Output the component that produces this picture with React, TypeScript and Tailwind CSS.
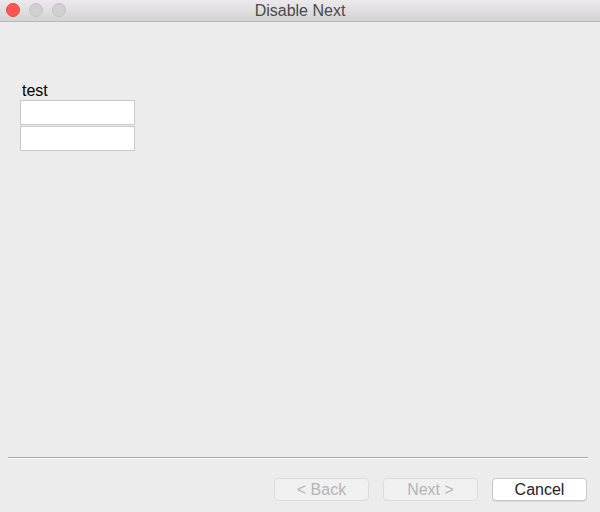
import React from 'react';

const font = { fontFamily: '"Helvetica Neue", "Liberation Sans", Arial, sans-serif' };

const TitleBar: React.FC = () => (
    <div className="relative h-[22px] flex items-center justify-center bg-gradient-to-b from-[#ebe9eb] to-[#d5d4d5] border-b border-[#b8b8b8]">
        <div className="absolute left-[6px] top-[3px] flex gap-[9px]">
            <span className="w-[14px] h-[14px] rounded-full bg-[#fc5753] border border-[#df4744]" />
            <span className="w-[14px] h-[14px] rounded-full bg-[#d0d0d0] border border-[#c2c2c2]" />
            <span className="w-[14px] h-[14px] rounded-full bg-[#d0d0d0] border border-[#c2c2c2]" />
        </div>
        <span className="text-[16px] text-[#4a4a4a] leading-none">Disable Next</span>
    </div>
);

const WizardButton: React.FC<{ label: string; disabled?: boolean }> = ({ label, disabled }) => (
    <button
        disabled={disabled}
        className={`w-[95px] h-[23px] rounded-[4px] text-[16px] leading-none flex items-center justify-center border ${
            disabled
                ? 'bg-[#f0f0f0] border-[#dcdcdc] text-[#b5b5b5]'
                : 'bg-white border-[#c8c8c8] text-[#222] shadow-[0_1px_0_rgba(0,0,0,0.08)]'
        }`}
    >
        {label}
    </button>
);

export default function App() {
    return (
        <div className="w-[600px] h-[512px] bg-[#ececec] flex flex-col overflow-hidden" style={font}>
            <TitleBar />
            <div className="flex-1 flex flex-col">
                <div className="pt-[60px] pl-[20px]">
                    <div className="pl-[2px] text-[16px] leading-[18px] text-black">test</div>
                    <div className="flex flex-col gap-[1px]">
                        <input className="w-[115px] h-[25px] bg-white border border-[#c9c9c9] outline-none" />
                        <input className="w-[115px] h-[25px] bg-white border border-[#c9c9c9] outline-none" />
                    </div>
                </div>
                <div className="flex-1" />
                <div className="mx-[8px] mr-[12px] h-[2px] border-t border-[#a9a9a9] border-b border-b-white" />
                <div className="flex justify-end gap-[14px] pr-[13px] pt-[19px] pb-[11px]">
                    <WizardButton label="< Back" disabled />
                    <WizardButton label="Next >" disabled />
                    <WizardButton label="Cancel" />
                </div>
            </div>
        </div>
    );
}
